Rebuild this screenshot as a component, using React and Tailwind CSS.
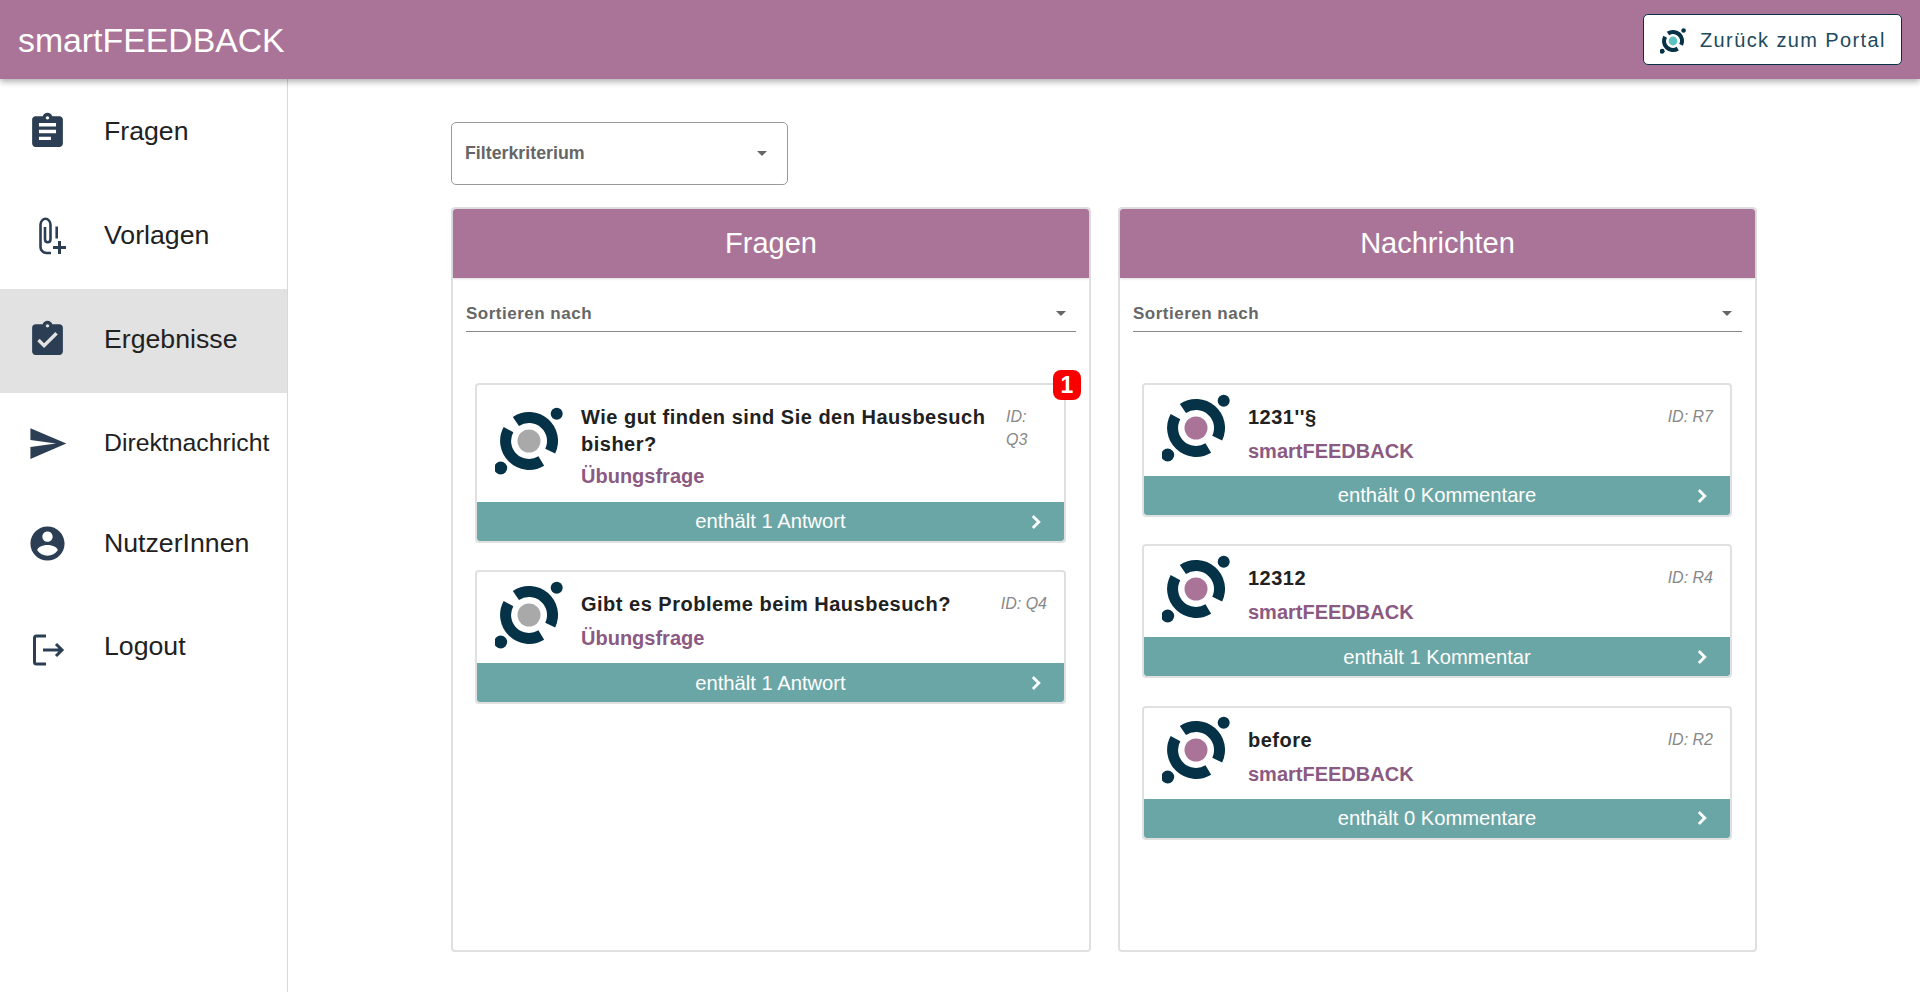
const SANS = "font-['Liberation_Sans',Arial,sans-serif]";

const Icon = ({ d, className = "" }) => (
  <svg viewBox="0 0 24 24" className={`h-[41px] w-[41px] fill-[#2c3e54] ${className}`}>
    <path d={d} />
  </svg>
);

const paths = {
  assignment:
    "M19 3h-4.18C14.4 1.84 13.3 1 12 1c-1.3 0-2.4.84-2.82 2H5c-1.1 0-2 .9-2 2v14c0 1.1.9 2 2 2h14c1.1 0 2-.9 2-2V5c0-1.1-.9-2-2-2zm-7 0c.55 0 1 .45 1 1s-.45 1-1 1-1-.45-1-1 .45-1 1-1zm2 14H7v-2h7v2zm3-4H7v-2h10v2zm0-4H7V7h10v2z",
  done: "M19 3h-4.18C14.4 1.84 13.3 1 12 1c-1.3 0-2.4.84-2.82 2H5c-1.1 0-2 .9-2 2v14c0 1.1.9 2 2 2h14c1.1 0 2-.9 2-2V5c0-1.1-.9-2-2-2zm-7 0c.55 0 1 .45 1 1s-.45 1-1 1-1-.45-1-1 .45-1 1-1zm-2 14l-4-4 1.41-1.41L10 14.17l6.59-6.59L18 9l-8 8z",
  send: "M2.01 21L23 12 2.01 3 2 10l15 2-15 2z",
  user: "M12 2C6.48 2 2 6.48 2 12s4.48 10 10 10 10-4.48 10-10S17.52 2 12 2zm0 3c1.66 0 3 1.34 3 3s-1.34 3-3 3-3-1.34-3-3 1.34-3 3-3zm0 14.2c-2.5 0-4.71-1.28-6-3.22.03-1.99 4-3.08 6-3.08 1.99 0 5.97 1.09 6 3.08-1.29 1.94-3.5 3.22-6 3.22z",
};

const ClipIcon = () => (
  <svg viewBox="0 0 41 41" className="h-[41px] w-[41px] overflow-visible fill-none stroke-[#2c3e54]">
    <path strokeWidth="2.6" d="M24 38h-4.500c-3.500 0-6-3-6-6V9.800c0-3.500 2.500-6 5-6s5 2.500 5 6V24c0 2-1 3.200-2.700 3.200S18 26 18 24V12" />
    <path strokeWidth="2.6" d="M29.700 11.500v12" />
    <path strokeWidth="3" d="M32.500 26v13M26 32.500h13" />
  </svg>
);

const LogoutIcon = () => (
  <svg viewBox="0 0 41 41" className="h-[41px] w-[41px] overflow-visible fill-none stroke-[#2c3e54] stroke-[3]">
    <path d="M19 10H9.500c-1.200 0-2 .8-2 2v24c0 1.200.8 2 2 2H19" />
    <path d="M16 24h19M29 18l6 6-6 6" />
  </svg>
);

const Logo = ({ dot, className }) => (
  <svg viewBox="-34 -34 68 68" className={className}>
    <g fill="none" stroke="#063247" strokeWidth="11">
      <path d="M-13.100 -19.500A23.500 23.500 0 0 1 21.200 10.200" />
      <path d="M12.300 20A23.500 23.500 0 0 1 -20.500 -11.400" />
    </g>
    <circle r="11.500" fill={dot} />
    <circle cx="27.700" cy="-27.300" r="6" fill="#063247" />
    <circle cx="-28.300" cy="27" r="6.500" fill="#063247" />
  </svg>
);

const NavItem = ({ icon, label, active, height, textSize = "text-[26.7px]" }) => (
  <div className={`flex items-center pl-[27px] ${height} ${active ? "bg-[#e2e2e2]" : ""}`}>
    {icon}
    <span className={`ml-[36px] leading-none text-[#212121] ${textSize}`}>{label}</span>
  </div>
);

const Caret = () => (
  <span className="h-0 w-0 border-x-[5px] border-t-[5px] border-x-transparent border-t-[#666]" />
);

const Chevron = () => (
  <svg viewBox="0 0 24 24" className="absolute right-[15px] h-[26px] w-[26px] fill-white">
    <path d="M10 6L8.590 7.410 13.170 12l-4.580 4.590L10 18l6-6z" stroke="white" strokeWidth="0.8" />
  </svg>
);

const Card = ({ title, sub, id, bar, dot, badge, rowClass = "min-h-[91px]", subClass = "mt-[7px]" }) => (
  <div className="relative rounded border-2 border-[#e0e0e0] bg-white">
    {badge && (
      <span className="absolute right-[-17px] top-[-15px] flex h-[30px] w-[28px] items-center justify-center rounded-lg bg-[#f90000] text-[23px] font-bold text-white">
        {badge}
      </span>
    )}
    <div className={`flex pl-[18px] pr-[17px] ${rowClass}`}>
      <div className="flex shrink-0 items-center pb-[6px]">
        <Logo dot={dot} className="h-[68px] w-[68px]" />
      </div>
      <div className="ml-[18px] min-w-0 flex-1 pb-[10px] pt-[19px]">
        <div className="text-[20px] font-bold leading-[27px] tracking-[0.5px] text-[#212121]">{title}</div>
        <div className={`text-[20px] font-bold leading-[27px] text-[#8b5a83] ${subClass}`}>{sub}</div>
      </div>
      <div className="ml-[16px] shrink-0 pt-[20px] text-[16px] italic leading-[23px] text-[#888]">{id}</div>
    </div>
    <div className="relative flex h-[39px] items-center justify-center rounded-b-[3px] bg-[#6ba6a6] text-[20.200px] text-white">
      {bar}
      <Chevron />
    </div>
  </div>
);

const Panel = ({ title, children, width }) => (
  <section className={`flex h-[745px] flex-col rounded border-2 border-[#e0e0e0] bg-white ${width}`}>
    <div className="flex h-[69px] items-center justify-center rounded-t-[3px] bg-[#aa7499] text-[29px] text-white shadow-sm">
      {title}
    </div>
    <div className="mx-[13px] mt-[17px] flex h-[37px] items-center justify-between border-b border-[#888] pr-[10px]">
      <span className="mt-[2px] text-[17px] font-bold tracking-[0.5px] text-[#666]">Sortieren nach</span>
      <Caret />
    </div>
    <div className="ml-[22px] mr-[23px] mt-[51px] flex flex-col gap-[27.4px]">{children}</div>
  </section>
);

const MessageCard = (props) => <Card {...props} dot="#aa7499" />;

export default function App() {
  return (
    <div className={`flex h-screen flex-col overflow-hidden bg-white ${SANS}`}>
      <header className="relative z-10 flex h-[79px] shrink-0 items-center justify-between bg-[#aa7499] pl-[18px] pr-[18px] shadow-[0_3px_6px_rgba(0,0,0,0.3)]">
        <h1 className="pt-[2px] text-[33.800px] font-normal leading-none text-white">smartFEEDBACK</h1>
        <button className="flex h-[51px] w-[259px] items-center rounded-[5px] border border-[#063247] bg-white pl-[16px] text-[20px] tracking-[1.390px] text-[#1d4a5e]">
          <Logo dot="#5fc1c1" className="mt-[3px] h-[26px] w-[26px] shrink-0" />
          <span className="ml-[14px] mt-[1px]">Zurück zum Portal</span>
        </button>
      </header>
      <div className="flex min-h-0 flex-1">
        <nav className="w-[288px] shrink-0 border-r border-[#d8d8d8]">
          <NavItem height="h-[104px]" icon={<Icon d={paths.assignment} />} label="Fragen" />
          <NavItem height="h-[106px] pb-[2px]" icon={<ClipIcon />} label="Vorlagen" />
          <NavItem height="h-[104px] pb-[4px]" active icon={<Icon d={paths.done} />} label="Ergebnisse" />
          <NavItem height="h-[100px]" textSize="text-[24.800px]" icon={<Icon d={paths.send} />} label="Direktnachricht" />
          <NavItem height="h-[100px]" icon={<Icon d={paths.user} />} label="NutzerInnen" />
          <NavItem height="h-[106px]" icon={<LogoutIcon />} label="Logout" />
        </nav>
        <main className="flex-1 pl-[163px] pt-[43px]">
          <div className="flex h-[63px] w-[337px] items-center justify-between rounded-[5px] border border-[#999] pl-[13px] pr-[20px]">
            <span className="text-[17.800px] font-bold text-[#666]">Filterkriterium</span>
            <Caret />
          </div>
          <div className="mt-[22px] flex gap-[27px]">
            <Panel title="Fragen" width="w-[640px]">
              <Card
                title="Wie gut finden sind Sie den Hausbesuch bisher?"
                sub="Übungsfrage"
                id={<span className="block w-[41px]">ID: Q3</span>}
                bar="enthält 1 Antwort"
                dot="#a9a9a9"
                badge="1"
                rowClass="min-h-[117px]"
                subClass="mt-[5px]"
              />
              <Card title="Gibt es Probleme beim Hausbesuch?" sub="Übungsfrage" id="ID: Q4" bar="enthält 1 Antwort" dot="#a9a9a9" />
            </Panel>
            <Panel title="Nachrichten" width="w-[639px]">
              <MessageCard title={"1231''§"} sub="smartFEEDBACK" id="ID: R7" bar="enthält 0 Kommentare" />
              <MessageCard title="12312" sub="smartFEEDBACK" id="ID: R4" bar="enthält 1 Kommentar" />
              <MessageCard title="before" sub="smartFEEDBACK" id="ID: R2" bar="enthält 0 Kommentare" />
            </Panel>
          </div>
        </main>
      </div>
    </div>
  );
}
